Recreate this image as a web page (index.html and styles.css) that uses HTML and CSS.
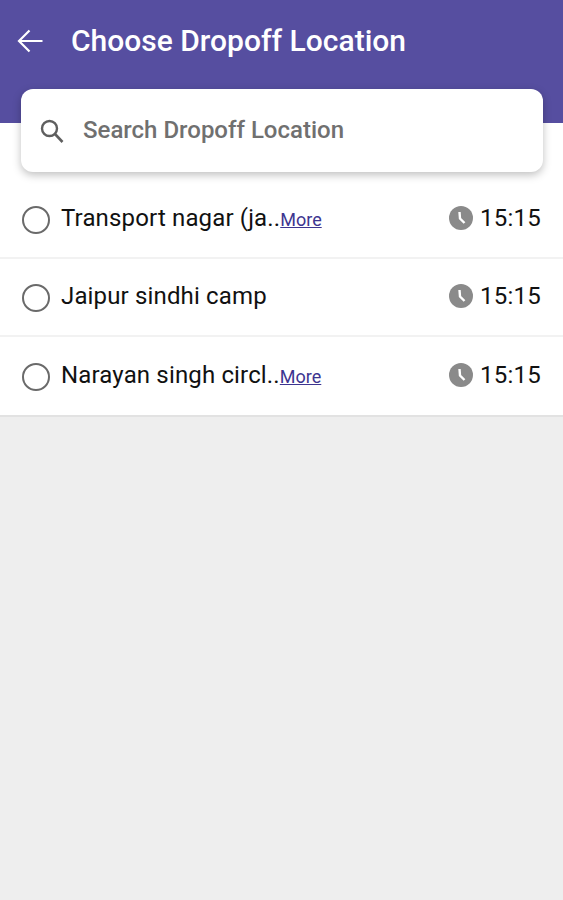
FILE: index.html
```html
<!DOCTYPE html>
<html lang="en">
<head>
	<meta charset="UTF-8">
	<title>Choose Dropoff Location</title>
	<link rel="stylesheet" href="styles.css">
</head>
<body>
	<div class="header">
		<svg class="back" width="30" height="30" viewBox="0 0 30 30"><path d="M25.500 15H2M12.500 4.500L2 15l10.500 10.500" fill="none" stroke="#fff" stroke-width="2.200"/></svg>
		<div class="title">Choose Dropoff Location</div>
	</div>
	<div class="search">
		<svg class="searchIcon" width="24" height="24" viewBox="0 0 24 24"><circle cx="9.500" cy="9.500" r="7.500" fill="none" stroke="#5f5f5f" stroke-width="2.400"/><path d="M15 15L22.500 23" fill="none" stroke="#5f5f5f" stroke-width="2.600"/></svg>
		<span class="placeholder">Search Dropoff Location</span>
	</div>
	<ul class="list">
		<li class="row">
			<span class="radio"></span>
			<span class="name">Transport nagar (ja..</span><a class="more" href="javascript:;">More</a>
			<svg class="clock" width="24" height="24" viewBox="0 0 24 24"><circle cx="12" cy="12" r="12" fill="#8a8a8a"/><path d="M10.500 6L11 12.500l4.500 4.500" fill="none" stroke="#fff" stroke-width="2.400"/></svg>
			<span class="time">15:15</span>
		</li>
		<li class="row">
			<span class="radio"></span>
			<span class="name">Jaipur sindhi camp</span>
			<svg class="clock" width="24" height="24" viewBox="0 0 24 24"><circle cx="12" cy="12" r="12" fill="#8a8a8a"/><path d="M10.500 6L11 12.500l4.500 4.500" fill="none" stroke="#fff" stroke-width="2.400"/></svg>
			<span class="time">15:15</span>
		</li>
		<li class="row">
			<span class="radio"></span>
			<span class="name">Narayan singh circl..</span><a class="more" href="javascript:;">More</a>
			<svg class="clock" width="24" height="24" viewBox="0 0 24 24"><circle cx="12" cy="12" r="12" fill="#8a8a8a"/><path d="M10.500 6L11 12.500l4.500 4.500" fill="none" stroke="#fff" stroke-width="2.400"/></svg>
			<span class="time">15:15</span>
		</li>
	</ul>
</body>
</html>
```

FILE: styles.css
```css
*{margin: 0;padding: 0;box-sizing: border-box;}
html,body{height: 100%;}
body{
	background-color: #eeeeee;
	font-family: Roboto, "Liberation Sans", sans-serif;
	overflow: hidden;
}
.header{
	height: 123px;
	background-color: #564ea0;
	display: flex;
	align-items: flex-start;
	padding: 26px 0 0 17px;
	color: #fff;
}
.back{flex: none;}
.title{
	margin-left: 24px;
	font-size: 30px;
	line-height: 30px;
	font-weight: 500;
}
.search{
	position: relative;
	z-index: 2;
	height: 83px;
	margin: -34px 20px -49px 21px;
	background-color: #fff;
	border-radius: 12px;
	box-shadow: 0 3px 8px rgba(0,0,0,0.25);
	display: flex;
	align-items: center;
	padding-left: 19px;
}
.searchIcon{flex: none;}
.placeholder{
	margin: -2px 0 0 19px;
	font-size: 24px;
	font-weight: 500;
	color: #707070;
}
.list{
	list-style: none;
	background-color: #fff;
	padding-top: 58px;
	border-bottom: 2px solid #e2e2e2;
}
.row{
	height: 78px;
	display: flex;
	align-items: center;
	padding: 0 22px;
	border-bottom: 2px solid #f2f2f2;
	color: #111;
}
.row:last-child{border-bottom: none;}
.radio{
	flex: none;
	width: 28px;
	height: 28px;
	border: 2px solid #6a6a6a;
	border-radius: 50%;
	margin: 1px 11px 0 0;
}
.name{font-size: 24px;letter-spacing: 0.15px;margin-top: -3px;}
.more{
	font-size: 18px;
	color: #3d3590;
}
.clock{
	flex: none;
	margin: -3px 0 0 auto;
}
.time{
	margin: -3px 0 0 7px;
	font-size: 24px;
	letter-spacing: 0.25px;
}
```
